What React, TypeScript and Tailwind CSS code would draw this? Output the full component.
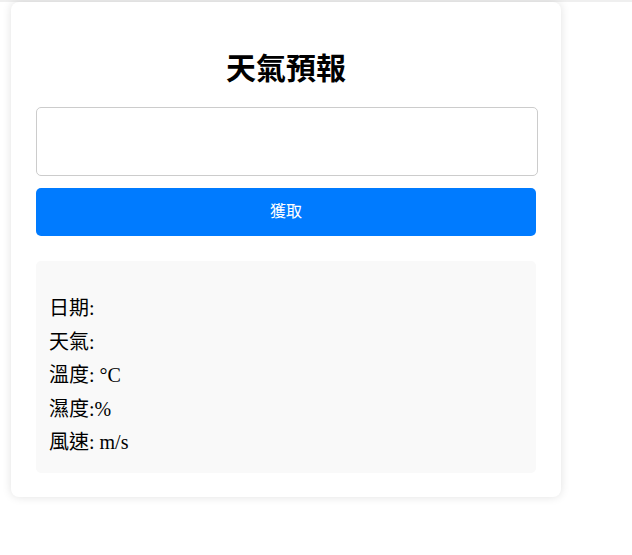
const rows = [
  { label: '日期', value: '' },
  { label: '天氣', value: '' },
  { label: '溫度', value: ' °C' },
  { label: '濕度', value: '%' },
  { label: '風速', value: ' m/s' },
];

export default function App() {
  return (
    <div className="min-h-[555px] bg-white">
      <div className="h-[2px] bg-[#efefef]" />
      <div className="ml-[11px] w-[550px] rounded-[8px] bg-white px-[25px] pt-[44px] pb-[24px] shadow-[0_0_10px_rgba(0,0,0,0.12)]">
        <h1 className="text-center text-[30px] leading-[46px] font-semibold text-black [font-family:Arial,'Noto_Sans_CJK_TC',sans-serif]">
          天氣預報
        </h1>
        <input
          type="text"
          className="mt-[15px] block h-[69px] w-[502px] rounded-[5px] border border-[#cccccc] bg-white px-3 outline-none"
        />
        <button className="mt-[12px] block h-[48px] w-full rounded-[5px] bg-[#007bff] text-[16px] text-white [font-family:Arial,'Noto_Sans_CJK_TC',sans-serif]">
          獲取
        </button>
        <div className="mt-[25px] rounded-[5px] bg-[#f9f9f9] px-[13px] pt-[31px] pb-[13px] text-[20px] leading-[33.5px] text-black [font-family:'Liberation_Serif','Noto_Sans_CJK_TC',serif]">
          {rows.map((r) => (
            <p key={r.label}>
              {r.label}:{r.value}
            </p>
          ))}
        </div>
      </div>
    </div>
  );
}
